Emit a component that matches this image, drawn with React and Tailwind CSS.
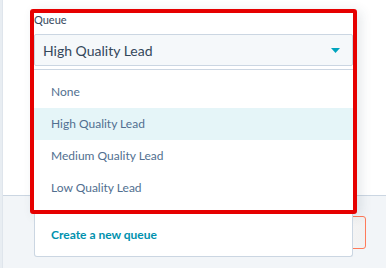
const options = ['None', 'High Quality Lead', 'Medium Quality Lead', 'Low Quality Lead'];

export default function App() {
  const selected = 'High Quality Lead';

  return (
    <div className="w-[386px] h-[268px] relative overflow-hidden flex bg-[#f2f5f8]" style={{ fontFamily: 'Lato, "Noto Sans", sans-serif' }}>
      <div className="w-[3px] h-full bg-[#e8edf2] border-r border-[#dfe5ec]" />
      <div className="flex-1 flex flex-col">
        <div className="h-[196px] bg-white border-b border-[#cbd6e2]" />
        <div className="flex-1 bg-[#f2f5f8]" />
      </div>

      {/* button peeking out behind the popover */}
      <div className="absolute left-[300px] top-[216px] w-[66px] h-[33px] rounded-[3px] border border-[#ff7a59] bg-gradient-to-r from-white to-[#f1f1f1]" />

      {/* queue popover */}
      <div className="absolute left-[30px] top-[9px] w-[327px]">
        <div className="border-4 border-[#e60000] rounded-[3px] bg-white shadow-[4px_2px_12px_rgba(45,62,80,0.12)]">
          <div className="h-[21px] text-[11px] leading-[14px] text-[#33475b]">Queue</div>
          <div className="h-[32px] border border-[#cbd6e2] bg-[#f5f8fa] rounded-[2px] flex items-center justify-between pl-[8px] pr-[12px]">
            <span className="text-[14px] text-[#33475b]">{selected}</span>
            <svg width="9" height="5" viewBox="0 0 9 5">
              <path d="M0 0h9L4.5 5z" fill="#00a4bd" />
            </svg>
          </div>
          <div className="mt-[3px] border-t border-[#cbd6e2] py-[6px]">
            {options.map((o) => (
              <div
                key={o}
                className={`h-[32px] flex items-center px-[17px] text-[12px] text-[#516f90] ${o === selected ? 'bg-[#e5f5f8]' : ''}`}
              >
                {o}
              </div>
            ))}
          </div>
        </div>
        <div className="mx-[4px] h-[43px] bg-white border-x border-b border-[#cbd6e2] rounded-b-[3px] flex items-center px-[16px]">
          <span className="text-[12px] font-bold text-[#0091ae]">Create a new queue</span>
        </div>
      </div>
    </div>
  );
}
